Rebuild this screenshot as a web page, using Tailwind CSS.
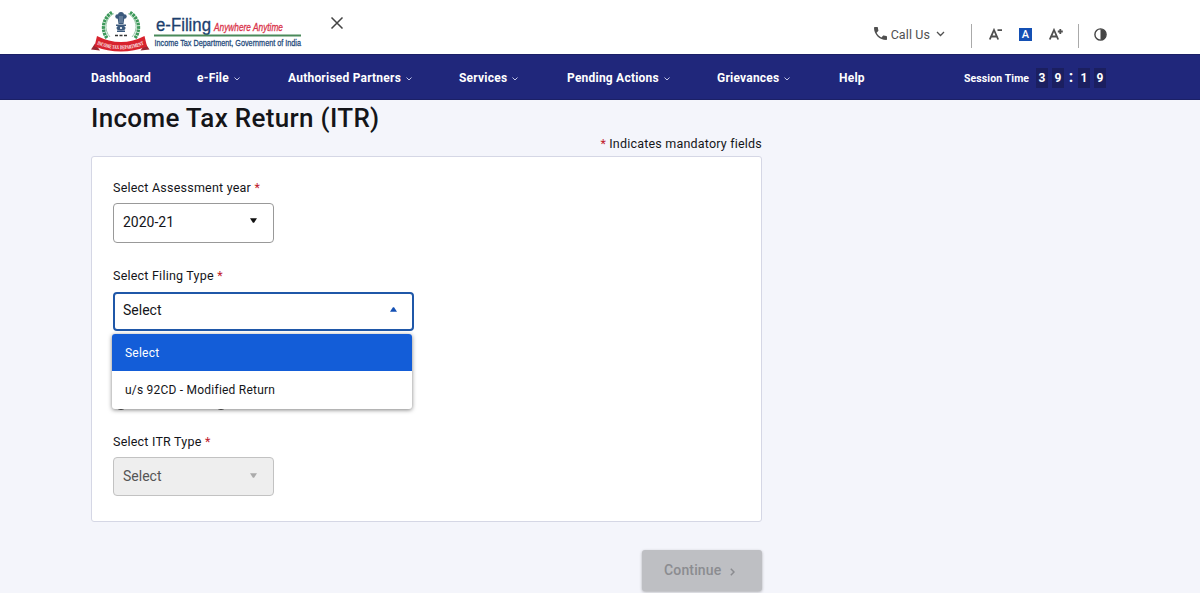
<!DOCTYPE html>
<html lang="en">
<head>
    <meta charset="UTF-8">
    <meta name="viewport" content="width=device-width, initial-scale=1.0">
    <title>Income Tax Return (ITR) - e-Filing</title>
    <script src="https://cdn.jsdelivr.net/npm/@tailwindcss/browser@4"></script>
</head>
<body class="h-[593px] overflow-hidden bg-[#f4f5fb] font-['Roboto',sans-serif] text-[#141519]">
    <!-- Top bar -->
    <header class="flex h-[54px] bg-white pl-[91px] pr-[93px]">
        <svg class="mt-[9px] h-[44px] w-[212px] shrink-0 overflow-visible" viewBox="0 0 212 44">
            <g fill="none" stroke="#3f9a5c">
                <path d="M21 3.500A17.500 17.500 0 0 0 16 29M39 3.500A17.500 17.500 0 0 1 44 29" stroke-width="3.400" stroke-dasharray="2.6 .7"/>
                <path d="M23 4.500A15 15 0 0 0 19 28M37 4.500A15 15 0 0 1 41 28" stroke="#9bcbaa" stroke-width="1"/>
            </g>
            <g fill="#3c5a7d">
                <circle cx="30" cy="6" r="3"/>
                <circle cx="26.500" cy="7.500" r="2.200"/>
                <circle cx="33.500" cy="7.500" r="2.200"/>
                <path d="M26.500 8h7l-1 7h-5zM25 15.500h10v1.500H25zM26 21.500h8v1.500h-8z"/>
                <ellipse cx="30" cy="19" rx="4.500" ry="2.500"/>
                <circle cx="30" cy="19" r="1.100" fill="#fff"/>
                <path d="M29 7v7M31 7v7" stroke="#b9c7d6" stroke-width=".6"/>
            </g>
            <path d="M24 26.500h3M28.500 26.500h3M33 26.500h3" stroke="#333" stroke-width="1.600"/>
            <path d="M0 40.500l4-6 5 7zM58.500 40.500l-4-6-5 7z" fill="#9c2733"/>
            <path d="M6 27Q30 39 53.500 27L56 37.500Q30 47.500 3.500 37.500Z" fill="#d8232e"/>
            <path id="ribbon" d="M6 35.500Q30 45 53.500 35.500" fill="none"/>
            <text class="font-['Liberation_Serif',serif] font-bold" font-size="5.600" fill="#fff"><textPath href="#ribbon" textLength="48" lengthAdjust="spacingAndGlyphs">INCOME TAX DEPARTMENT</textPath></text>
            <text x="65" y="22" textLength="55" lengthAdjust="spacingAndGlyphs" class="font-['Liberation_Sans',sans-serif]" font-size="18" fill="#1c3f6e" stroke="#1c3f6e" stroke-width=".3">e-Filing</text>
            <text x="123" y="22" textLength="69" lengthAdjust="spacingAndGlyphs" class="font-['Liberation_Sans',sans-serif] italic" font-size="11" fill="#d9334a" stroke="#d9334a" stroke-width=".3">Anywhere Anytime</text>
            <path d="M63 26.500h147" stroke="#4a8a5a" stroke-width="2"/>
            <text x="63.500" y="37" textLength="146.500" lengthAdjust="spacingAndGlyphs" class="font-['Liberation_Sans',sans-serif]" font-size="9.500" fill="#1f4a7a" stroke="#1f4a7a" stroke-width=".3">Income Tax Department, Government of India</text>
        </svg>
        <svg class="ml-[27px] mt-[17px] h-3 w-3.5" viewBox="0 0 14 12" fill="none" stroke="#444" stroke-width="1.500">
            <path d="M1.500.5l11 11M12.500.5l-11 11"/>
        </svg>

        <div class="ml-auto flex items-center pt-3.5 text-[#505050]">
            <svg class="mr-1 -mt-0.5 h-[13px] w-[13px]" viewBox="3 3 18 18" fill="currentColor">
                <path d="M6.620 10.790c1.440 2.830 3.760 5.140 6.590 6.590l2.200-2.200c.27-.27.67-.36 1.020-.24 1.120.37 2.330.57 3.570.57.550 0 1 .45 1 1V20c0 .55-.45 1-1 1C10.610 21 3 13.390 3 4c0-.55.450-1 1-1h3.500c.55 0 1 .45 1 1 0 1.250.2 2.450.57 3.570.11.350.03.740-.25 1.020l-2.200 2.200z"/>
            </svg>
            <span class="pt-0.5 text-[12.5px] leading-none tracking-[0.1px]">Call Us</span>
            <svg class="ml-1.5 h-1.5 w-[9px]" viewBox="0 0 9 6" fill="none" stroke="currentColor" stroke-width="1.300"><path d="M1 1l3.500 3.500L8 1"/></svg>
            <span class="ml-[26px] mt-1 h-6 w-px bg-[#aaa]"></span>
            <svg class="ml-[17px] h-[13px] w-3.5" viewBox="0 0 14 13" fill="none" stroke="currentColor" stroke-width="1.800"><path d="M.8 11.500L5 2l4.200 9.500M2.300 8.500h5.400M8.500 2.200h4.500"/></svg>
            <span class="ml-4 flex h-[13px] w-[13px] items-center justify-center bg-[#1450b4] text-[11px] font-medium leading-none text-white">A</span>
            <svg class="ml-[17px] h-[13px] w-3.5" viewBox="0 0 14 13" fill="none" stroke="currentColor" stroke-width="1.800"><path d="M.8 11.500L5 2l4.200 9.500M2.300 8.500h5.400M8.800 3.500h5M11.300 1v5"/></svg>
            <span class="ml-[15px] mt-1 h-6 w-px bg-[#aaa]"></span>
            <svg class="ml-[15px] h-[13px] w-[13px]" viewBox="0 0 13 13"><circle cx="6.500" cy="6.500" r="5.600" fill="none" stroke="#444" stroke-width="1.400"/><path d="M6.500 1a5.500 5.500 0 0 1 0 11z" fill="#444"/></svg>
        </div>
    </header>

    <!-- Main menu -->
    <nav class="flex h-[46px] items-center border-y border-[#1b2066] bg-[#20277b] pt-0.5 pl-[91px] text-xs font-bold tracking-[0.22px] whitespace-nowrap text-white">
        <a class="w-[106px]">Dashboard</a>
        <a class="flex w-[91px] items-center gap-[5px]">e-File <svg class="mt-0.5 h-1 w-1.5" viewBox="0 0 6 4" fill="none" stroke="#c5c8ea"><path d="M.5.5L3 3 5.500.5"/></svg></a>
        <a class="flex w-[171px] items-center gap-[5px]">Authorised Partners <svg class="mt-0.5 h-1 w-1.5" viewBox="0 0 6 4" fill="none" stroke="#c5c8ea"><path d="M.5.5L3 3 5.500.5"/></svg></a>
        <a class="flex w-[108px] items-center gap-[5px]">Services <svg class="mt-0.5 h-1 w-1.5" viewBox="0 0 6 4" fill="none" stroke="#c5c8ea"><path d="M.5.5L3 3 5.500.5"/></svg></a>
        <a class="flex w-[150px] items-center gap-[5px]">Pending Actions <svg class="mt-0.5 h-1 w-1.5" viewBox="0 0 6 4" fill="none" stroke="#c5c8ea"><path d="M.5.5L3 3 5.500.5"/></svg></a>
        <a class="flex w-[122px] items-center gap-[5px]">Grievances <svg class="mt-0.5 h-1 w-1.5" viewBox="0 0 6 4" fill="none" stroke="#c5c8ea"><path d="M.5.5L3 3 5.500.5"/></svg></a>
        <a class="w-[125px]">Help</a>
        <span class="w-[72px] pt-0.5 text-[10.5px] tracking-[0.1px]">Session Time</span>
        <div class="flex items-center text-center leading-5">
            <span class="w-3 bg-[#1b1f60]">3</span>
            <span class="ml-1 w-3 bg-[#1b1f60]">9</span>
            <span class="w-3.5 pb-0.5 text-base leading-4">:</span>
            <span class="w-3 bg-[#1b1f60]">1</span>
            <span class="ml-1 w-3 bg-[#1b1f60]">9</span>
        </div>
    </nav>

    <main class="ml-[91px] w-[671px]">
        <h1 class="pt-1 text-[26px] font-medium leading-7 tracking-[0.32px]">Income Tax Return (ITR)</h1>
        <p class="mt-0.5 h-[22px] text-right text-[12.5px] leading-5 tracking-[0.2px]"><span class="text-[#c0202c]">*</span> Indicates mandatory fields</p>

        <section class="h-[366px] rounded-[3px] border border-[#d5d7e5] bg-white px-[21px] pt-[22px]">
            <label class="block h-6 text-[12.5px] leading-[18px] tracking-[0.22px]">Select Assessment year <span class="text-[#c0202c]">*</span></label>
            <div class="flex h-10 w-[161px] items-center justify-between rounded border border-[#999] pb-[3px] pl-[9px] pr-4">
                <span class="text-sm">2020-21</span>
                <svg class="-mt-0.5 h-[5px] w-[7px]" viewBox="0 0 6 4"><path d="M0 0h6L3.500 4h-1z" fill="#111"/></svg>
            </div>

            <label class="mt-6 block h-[25px] text-[12.5px] leading-[18px] tracking-[0.22px]">Select Filing Type <span class="text-[#c0202c]">*</span></label>
            <div class="relative">
                <div class="flex h-[39px] w-[301px] items-center justify-between rounded border-2 border-[#1f57a8] pb-[3px] pl-2 pr-[15px]">
                    <span class="text-sm">Select</span>
                    <svg class="-mt-0.5 h-[5px] w-[7px]" viewBox="0 0 6 4"><path d="M0 4h6L3.500 0h-1z" fill="#1450b4"/></svg>
                </div>
                <ul class="absolute top-[42px] -left-px z-10 w-[300px] overflow-hidden rounded-[3px] bg-white text-xs leading-[38px] tracking-[0.22px] shadow-[0_1px_4px_rgba(0,0,0,0.5)]">
                    <li class="h-[37px] bg-[#135dd8] pl-[13px] text-white">Select</li>
                    <li class="h-[38px] pl-[13px]">u/s 92CD - Modified Return</li>
                </ul>
            </div>

            <!-- radio row, mostly under the open list -->
            <div class="mt-[67px] flex h-3 gap-[88px] pl-0.5">
                <span class="h-3 w-3 rounded-full border-2 border-[#555]"></span>
                <span class="h-3 w-3 rounded-full border-2 border-[#555]"></span>
            </div>

            <label class="mt-[23px] block h-6 text-[12.5px] leading-[18px] tracking-[0.22px]">Select ITR Type <span class="text-[#c0202c]">*</span></label>
            <div class="flex h-[39px] w-[161px] items-center justify-between rounded border border-[#c2c2c2] bg-[#eee] pb-px pl-[9px] pr-4">
                <span class="text-sm text-[#555]">Select</span>
                <svg class="-mt-0.5 h-[5px] w-[7px]" viewBox="0 0 6 4"><path d="M0 0h6L3.500 4h-1z" fill="#aaa"/></svg>
            </div>
        </section>

        <button class="mt-7 ml-auto flex h-[41px] w-[120px] items-center rounded-[3px] bg-[#bebfc3] pb-px pl-[22px] text-sm font-medium tracking-[0.15px] text-[#8b8c90] shadow-[0_1px_3px_rgba(0,0,0,0.3)]">
            Continue
            <svg class="mt-[3px] ml-[9px] h-2 w-[5px]" viewBox="0 0 5 8" fill="none" stroke="currentColor" stroke-width="1.500"><path d="M.8.8L4 4 .8 7.200"/></svg>
        </button>
    </main>
</body>
</html>
